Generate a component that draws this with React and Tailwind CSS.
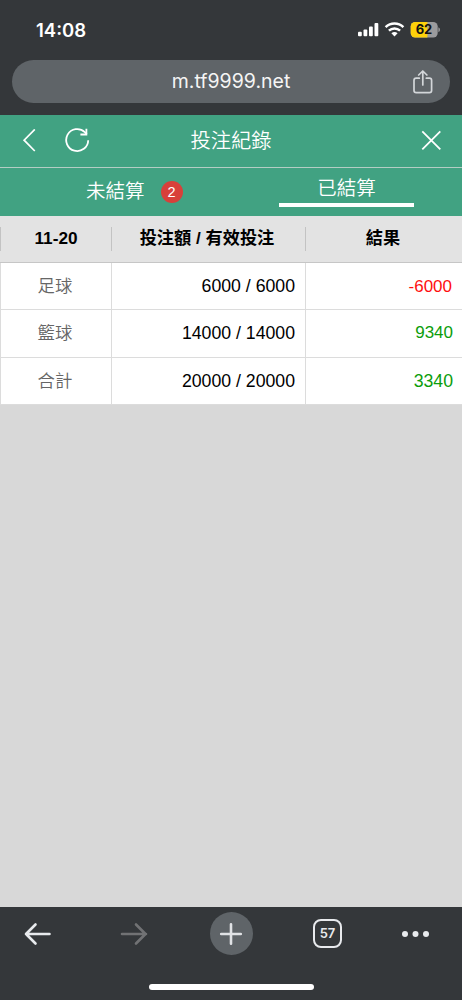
const rows = [
    { name: "足球", bet: "6000 / 6000", result: -6000, style: "pr-[10px] text-[17px]" },
    { name: "籃球", bet: "14000 / 14000", result: 9340, style: "pr-[9px] text-[17px]" },
    { name: "合計", bet: "20000 / 20000", result: 3340, style: "pr-[9px] text-[17.7px]" },
];

function StatusBar() {
    return (
        <div className="flex h-[60px] items-center pr-[22px] pl-[36px] text-white">
            <span className="text-[18.5px] leading-none font-semibold">14:08</span>
            <svg className="ml-auto h-4 w-[82px]" viewBox="0 0 82 16">
                <g fill="#fff">
                    <rect x="0" y="9.7" width="3.8" height="4.5" rx="1" />
                    <rect x="5.5" y="7.5" width="3.8" height="6.7" rx="1" />
                    <rect x="11" y="4.5" width="3.8" height="9.7" rx="1" />
                    <rect x="16.5" y="1" width="3.8" height="13.2" rx="1" />
                </g>
                <g fill="none" stroke="#fff" strokeWidth="2.5">
                    <path d="M27.6 5.1a13 13 0 0 1 17.8 0" />
                    <path d="M30.9 8.6a8.3 8.3 0 0 1 11.2 0" />
                </g>
                <path d="M33.4 11.2a4.8 4.8 0 0 1 6.2 0l-3.1 3.2z" fill="#fff" />
                <rect x="52.7" y="0" width="27" height="15.5" rx="4.5" fill="#9b9b9d" />
                <path d="M57.2 0H69.4v15.5H57.2a4.5 4.5 0 0 1-4.5-4.5V4.5A4.5 4.5 0 0 1 57.2 0z" fill="#fed10a" />
                <path d="M80.4 5.3q1.6.8 1.6 2.5t-1.6 2.5z" fill="#9b9b9d" />
                <text x="66" y="12.4" textAnchor="middle" fontSize="13" fontWeight="700" fill="#111">62</text>
            </svg>
        </div>
    );
}

function AddressBar() {
    return (
        <div className="mx-3 flex h-[43px] items-center rounded-full bg-[#5f6468] pr-[16px] pl-[38px]">
            <span className="flex-1 text-center text-[19.5px] text-[#f5f5f5]">m.tf9999.net</span>
            <svg
                className="h-6 w-[22px]"
                viewBox="0 0 22 24"
                fill="none"
                stroke="#d3d6d9"
                strokeWidth="1.7"
                strokeLinecap="round"
                strokeLinejoin="round"
            >
                <path d="M7.3 8.2H4.2a2.2 2.2 0 0 0-2.2 2.2v10a2.2 2.2 0 0 0 2.2 2.2h13.2a2.2 2.2 0 0 0 2.2-2.2v-10a2.2 2.2 0 0 0-2.2-2.2h-3.1" />
                <path d="M10.8 15V1.3M6.7 5l4.1-4L14.9 5" />
            </svg>
        </div>
    );
}

function TitleBar() {
    return (
        <div className="flex h-[53px] items-center border-b border-[#b4cdc4] pr-[20px] pl-[22px]">
            <svg className="h-6 w-[14px]" viewBox="0 0 14 24" fill="none" stroke="#fff" strokeWidth="1.7">
                <path d="M12.8 0.4 2.1 11.2l10.7 10.8" />
            </svg>
            <svg className="ml-[28px] h-[26px] w-[26px]" viewBox="0 0 26 26" fill="none" stroke="#fff" strokeWidth="1.8">
                <path d="M24.2 12.2A11 11 0 1 1 20.8 4.1l2 2" />
                <path d="M22.4 0.8v5.7h-6" />
            </svg>
            <h1 className="flex-1 pr-[48px] text-center text-[20.3px] font-[350] text-white">投注紀錄</h1>
            <svg className="h-[22px] w-[22px]" viewBox="0 0 22 22" fill="none" stroke="#fff" strokeWidth="1.8">
                <path d="m2.3 1.4 18 18M20.3 1.4l-18 18" />
            </svg>
        </div>
    );
}

function Tabs() {
    return (
        <div className="flex h-[48px] text-[19.5px] leading-[28px] font-[350] text-white">
            <div className="flex w-[231px] items-start pt-[9px] pl-[86px]">
                <span>未結算</span>
                <span className="mt-[4px] ml-[16px] flex h-[22px] w-[22px] items-center justify-center rounded-full bg-[#d8403a] text-[14.5px] font-normal">
                    2
                </span>
            </div>
            <div className="flex w-[231px] flex-col items-center pt-[6px]">
                <span>已結算</span>
                <span className="mt-[1px] h-[4px] w-[135px] bg-white" />
            </div>
        </div>
    );
}

function BetTable() {
    return (
        <div className="text-[17.7px]">
            <div className="grid h-[47px] grid-cols-[111px_194px_157px] items-center border-b border-[#c6c6c6] bg-[#e3e3e3] text-center text-[17.2px] font-bold text-black">
                <div className="h-6 border-l border-[#c3c3c3] leading-[23px]">11-20</div>
                <div className="h-6 border-l border-[#c3c3c3] pr-[3px] leading-[23px]">投注額 / 有效投注</div>
                <div className="h-6 border-l border-[#c3c3c3] pr-[2px] leading-[23px]">結果</div>
            </div>
            {rows.map((row) => (
                <div
                    key={row.name}
                    className="grid h-[47.3px] grid-cols-[111px_194px_157px] border-b border-[#dcdcdc] bg-white leading-[46px]"
                >
                    <div className="border-l border-[#dcdcdc] pr-[2px] text-center text-[17.4px] font-[350] text-[#666]">
                        {row.name}
                    </div>
                    <div className="border-l border-[#dcdcdc] pr-[10px] text-right text-black">{row.bet}</div>
                    <div
                        className={`border-l border-[#dcdcdc] text-right ${row.style} ${
                            row.result < 0 ? "pt-px text-[#ff0f0f]" : "text-[#0b9d0b]"
                        }`}
                    >
                        {row.result}
                    </div>
                </div>
            ))}
        </div>
    );
}

function BottomBar() {
    return (
        <div className="flex h-[93px] flex-col items-center bg-[#34373a]">
            <div className="flex h-[53px] w-full items-center pl-[23px]">
                <svg className="h-6 w-7" viewBox="0 0 28 24" fill="none" stroke="#e8eaed" strokeWidth="2.6" strokeLinecap="round" strokeLinejoin="round">
                    <path d="M26.5 12H3M12.5 2.5 3 12l9.5 9.5" />
                </svg>
                <svg className="ml-[69px] h-6 w-7" viewBox="0 0 28 24" fill="none" stroke="#717274" strokeWidth="2.6" strokeLinecap="round" strokeLinejoin="round">
                    <path d="M2 12h24M16 2.5l9.5 9.5-9.5 9.5" />
                </svg>
                <div className="ml-[61.5px] flex h-[43px] w-[43px] items-center justify-center rounded-full bg-[#5f6468]">
                    <svg className="h-6 w-6" viewBox="0 0 24 24" stroke="#e0e2e5" strokeWidth="2.6" strokeLinecap="round">
                        <path d="M12 2.2v19.6M2.2 12h19.6" />
                    </svg>
                </div>
                <div className="ml-[60.5px] flex h-[29px] w-[29px] items-center justify-center rounded-[8px] border-2 border-[#e8eaed] text-[13px] font-semibold text-[#e8eaed]">
                    57
                </div>
                <svg className="ml-[60px] h-2 w-[28px]" viewBox="0 0 28 8" fill="#e8eaed">
                    <circle cx="3" cy="4" r="3" />
                    <circle cx="13.5" cy="4" r="3" />
                    <circle cx="24" cy="4" r="3" />
                </svg>
            </div>
            <div className="mt-[24px] h-[6px] w-[165px] rounded-full bg-white" />
        </div>
    );
}

export default function App() {
    return (
        <div className="flex h-[1000px] w-[462px] flex-col overflow-hidden bg-[#d8d8d8] font-['Inter',sans-serif]">
            <header className="h-[115px] bg-[#34373a]">
                <StatusBar />
                <AddressBar />
            </header>
            <main className="flex-1 font-['Liberation_Sans','Noto_Sans_CJK_TC',sans-serif]">
                <div className="h-[101px] bg-[#41a282]">
                    <TitleBar />
                    <Tabs />
                </div>
                <BetTable />
            </main>
            <BottomBar />
        </div>
    );
}
